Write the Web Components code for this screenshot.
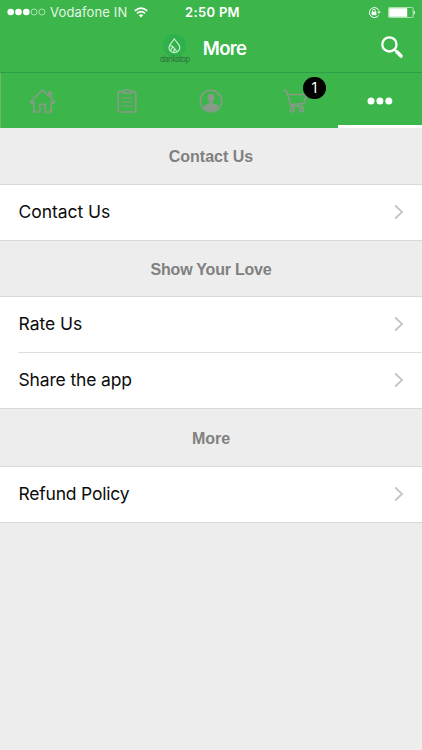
<!DOCTYPE html>
<html lang="en">
<head>
<meta charset="utf-8">
<title>More</title>
<style>
html,body{margin:0;height:100%;background:#ededed;overflow:hidden}
body{font-family:Inter,"Liberation Sans",sans-serif;-webkit-font-smoothing:antialiased}
</style>
</head>
<body>
<more-screen></more-screen>
<script>
const define = (name, html) => customElements.define(name, class extends HTMLElement {
  constructor(){ super(); this.attachShadow({mode:'open'}).innerHTML = html; }
});

define('status-bar', `
<style>
:host{display:grid;grid-template-columns:1fr auto 1fr;align-items:center;height:24px;color:#fff;font-size:13px;line-height:24px}
.l{display:flex;align-items:center;padding-left:7px;color:#e4f6e6}
.l span{margin-left:4px;letter-spacing:.14px}
.wifi{margin-left:7px}
.t{font-weight:600;font-size:13px;letter-spacing:.32px;padding-left:3px}
.r{display:flex;justify-content:flex-end;align-items:center;padding-right:7px;gap:7px}
svg{display:block}
</style>
<div class="l">
<svg width="39" height="8" viewBox="0 0 39 8"><g fill="#fff"><circle cx="3.7" cy="4" r="3.3"/><circle cx="11.5" cy="4" r="3.3"/><circle cx="19.3" cy="4" r="3.3"/></g><g fill="none" stroke="#c9edcc" stroke-width=".8"><circle cx="27.1" cy="4" r="3"/><circle cx="34.9" cy="4" r="3"/></g></svg>
<span>Vodafone IN</span>
<svg class="wifi" width="14" height="11" viewBox="0 0 14 11"><g fill="none" stroke="#fff" stroke-width="1.7"><path d="M.8 3.9Q7-1.6 13.2 3.9"/><path d="M3 6.4Q7 3 11 6.4"/></g><path d="M4.8 8.2Q7 6.4 9.2 8.2L7 10.6Z" fill="#fff"/></svg>
</div>
<div class="t">2:50 PM</div>
<div class="r">
<svg width="13" height="13" viewBox="0 0 13 13" fill="none" stroke="#fff"><path d="M10.6 9.3A5 5 0 1 1 11 4.6" stroke-width="1"/><path d="M9.2 5.4h3.6L11 7.8Z" fill="#fff" stroke="none"/><rect x="3.600" y="5.800" width="4.800" height="3.400" fill="#fff" stroke="none"/><path d="M4.600 6V4.700a1.400 1.400 0 0 1 2.800 0V6" stroke-width=".9"/></svg>
<svg width="27" height="11" viewBox="0 0 27 11"><rect x=".4" y=".4" width="24.7" height="10.2" rx="1.3" fill="none" stroke="#d5f1d7" stroke-width=".8"/><rect x="1.2" y="1.2" width="18" height="8.6" fill="#fff"/><path d="M25.8 3.5q1.2.3 1.2 2t-1.2 2Z" fill="#fff"/></svg>
</div>`);

define('brand-logo', `
<style>
:host{display:flex;flex-direction:column;align-items:center;width:30px}
svg{display:block}
span{font:8px/8px Inter,sans-serif;letter-spacing:-.7px;color:#2c7439;margin-top:-3px;white-space:nowrap;transform:scaleY(1.12)}
</style>
<svg width="25" height="25" viewBox="0 0 25 25"><circle cx="12.5" cy="12.5" r="11.5" fill="#2eb04b"/><g fill="none" stroke="#c8efcf" stroke-width="1.2" stroke-linejoin="round"><path d="M12.3 5.8C10.6 9 7 11.4 7 14.6a5.4 5 0 0 0 10.8 0C17.8 11.4 14 9 12.3 5.8Z"/><path d="M8.2 12.4l2.2.8 4.4 5.2M10.7 13.3l-1.8 4.1M12.7 15.8l-1.2 3.4"/></g></svg>
<span>dankstop</span>`);

define('title-bar', `
<style>
:host{display:grid;grid-template-columns:1fr auto 1fr;align-items:center;height:48px}
.c{grid-column:2;display:flex;align-items:center;gap:13px;padding-right:16px}
h1{margin:0;font-size:18.5px;font-weight:600;letter-spacing:-.7px;color:#fff;line-height:24px}
.s{justify-self:end}
.s svg{display:block;padding-right:18px;margin-top:-2px}
</style>
<div></div><div class="c"><brand-logo></brand-logo><h1>More</h1></div>
<div class="s"><svg width="24" height="24" viewBox="0 0 24 24" fill="none" stroke="#fff"><circle cx="9.4" cy="9.4" r="7.1" stroke-width="2.3"/><path d="M14.800 14.800l2 2" stroke-width="2.200"/><path d="M17 17l4 4" stroke-width="3.600" stroke-linecap="round"/></svg></div>`);

define('tab-item', `
<style>
:host{display:flex;flex:1;align-items:center;justify-content:center;position:relative;box-sizing:border-box;height:55px;border-bottom:3px solid transparent;padding-top:3px}
:host([active]){border-bottom-color:#fff}
</style><slot></slot>`);

define('count-badge', `
<style>
:host{position:absolute;left:50px;top:4px;width:22.4px;height:22.4px;border-radius:50%;background:#000;color:#fff;font-size:14px;line-height:22px;text-align:center}
</style><slot></slot>`);

define('tab-strip', `
<style>
:host{display:flex;height:56px;box-sizing:border-box;border-top:1px solid #2f9e4b;background:linear-gradient(#63bb6e,#63bb6e) 0 0/1px 100% no-repeat #3cb54b}
svg{display:block;fill:none;stroke:#889b88;stroke-width:1.6}
</style>
<tab-item><svg width="28" height="28" viewBox="-.5 0 28 28" stroke-linejoin="round"><path d="M14 3L1.8 14.8l1.5 1.3 1.9-1.6V25h6.2v-7.8h5.2V25h6.2V14.5l1.9 1.6 1.5-1.3L22.8 11.5V5.4h-2.4v3.8Z"/></svg></tab-item>
<tab-item><svg width="20" height="26" viewBox="0 0 20 26"><path d="M5.4 3.6H2.6Q1.2 3.6 1.2 5v17.6Q1.2 24 2.6 24h14.8q1.4 0 1.4-1.4V5q0-1.4-1.4-1.4h-2.8"/><path d="M5.5 5.2V3h2q.4-1.5 2.5-1.5T12.500 3h2v2.200Z"/><path d="M4.500 10h11M4.500 14h11M4.500 18h11" stroke-width="1.200"/></svg></tab-item>
<tab-item><svg width="24" height="24" viewBox="0 0 24 24"><circle cx="12" cy="12" r="10.700"/><path d="M12 4.800c-2.400 0-3.700 1.700-3.500 4 .1 2 .9 3 1.700 3.900v1.500c-1.800 1.200-4.500 1-6 3.200Q7.500 21.800 12 21.800t7.800-4.400c-1.500-2.200-4.200-2-6-3.200v-1.500c.8-.9 1.600-1.900 1.700-3.900.2-2.300-1.100-4-3.500-4Z" fill="#889b88" stroke="none"/></svg></tab-item>
<tab-item><svg width="26" height="26" viewBox="0 0 26 26" stroke-width="1.500"><path d="M.8 2.500h2.700q1 0 1.300 1l4 14.700h12.700M6 6.500h18.500l-2.600 9-13.800 1"/><circle cx="10.200" cy="22" r="1.900"/><circle cx="19.700" cy="22" r="1.900"/></svg><count-badge>1</count-badge></tab-item>
<tab-item active><svg width="26" height="8" viewBox="0 0 26 8"><g fill="#fff" stroke="none"><circle cx="4" cy="4" r="3.500"/><circle cx="12.900" cy="4" r="3.500"/><circle cx="21.800" cy="4" r="3.500"/></g></svg></tab-item>`);

define('section-heading', `
<style>
:host{display:flex;align-items:center;justify-content:center;height:56px;box-sizing:border-box;border-bottom:1px solid #d9d9dc;padding-top:2px;background:#ededed;color:#808080;font-family:"Liberation Sans",Arial,sans-serif;font-weight:700;font-size:16px;letter-spacing:var(--track,0)}
:host([first]){height:57px;padding-top:2px}
:host([tall]){height:58px;padding-top:2px}
</style><slot></slot>`);

define('list-row', `
<style>
:host{display:flex;align-items:center;justify-content:space-between;box-sizing:border-box;height:56px;padding:0 18px 1px;background:#fff;border-bottom:1px solid #d9d9dc;color:#0c0c0c;font-size:17.500px;letter-spacing:var(--track,-.2px)}
:host([inset]){border-bottom:0;padding-bottom:2px;background:linear-gradient(#dedee1,#dedee1) 18px 100%/100% 1px no-repeat #fff}
svg{display:block}
span{padding:0 0 1px .5px}
</style><span><slot></slot></span>
<svg width="10" height="16" viewBox="0 0 10 16"><path d="M1.200 1.500L8 8l-6.800 6.500" fill="none" stroke="#c6c6ca" stroke-width="1.900"/></svg>`);

define('more-screen', `
<style>
:host{display:block;min-height:100vh;background:#ededed}
header{background:#3cb54b}
</style>
<header><status-bar></status-bar><title-bar></title-bar><tab-strip></tab-strip></header>
<section-heading first>Contact Us</section-heading>
<list-row style="--track:-.05px">Contact Us</list-row>
<section-heading style="--track:-.22px">Show Your Love</section-heading>
<list-row inset style="--track:-.05px">Rate Us</list-row>
<list-row style="--track:-.15px">Share the app</list-row>
<section-heading tall>More</section-heading>
<list-row>Refund Policy</list-row>`);
</script>
</body>
</html>
